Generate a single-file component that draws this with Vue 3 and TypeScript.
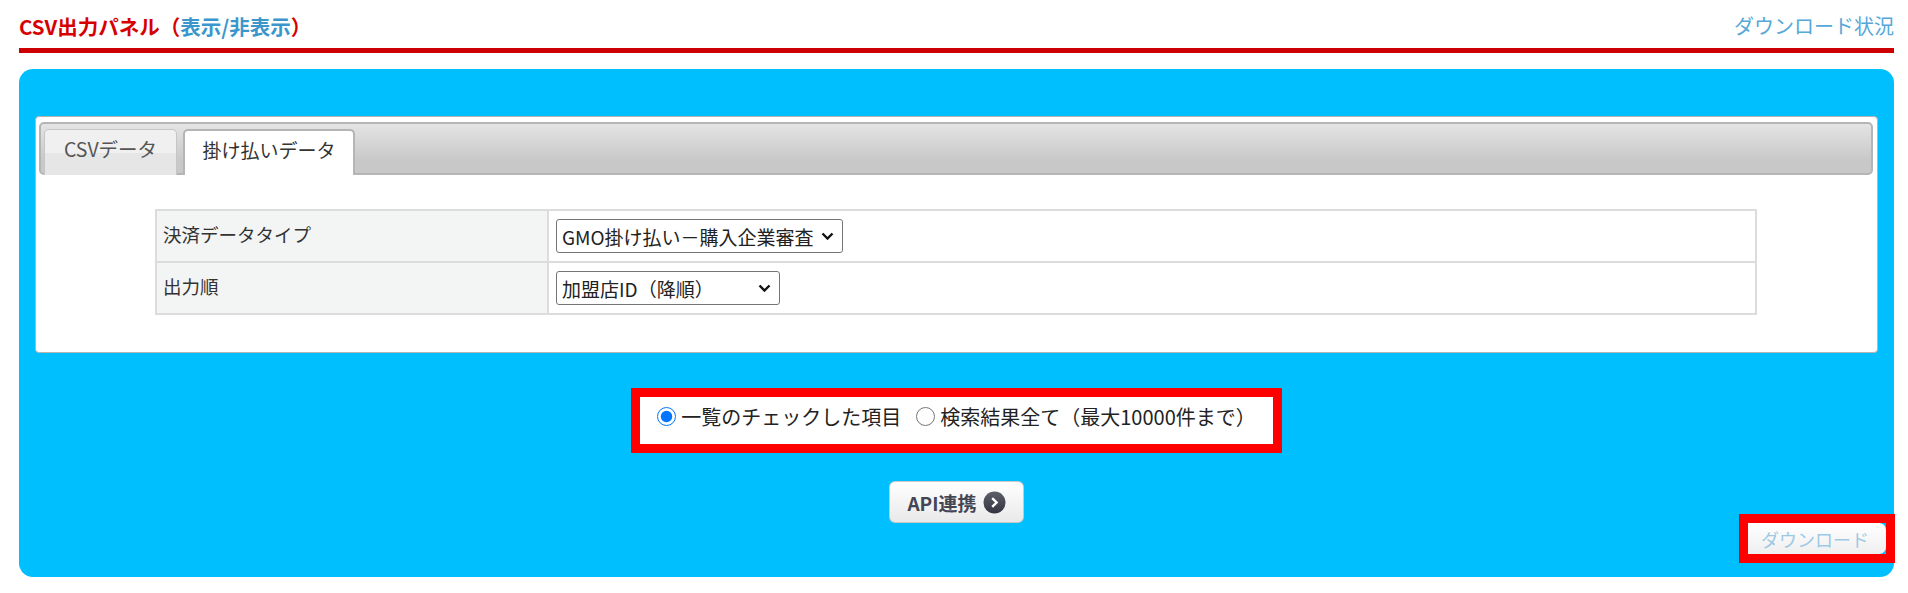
<script setup lang="ts">
import { ref } from 'vue'

const scope = ref<'checked' | 'all'>('checked')
const payType = ref('buyer')
const order = ref('desc')
</script>

<template>
  <div class="page">
    <header class="head">
      <h2 class="title">CSV出力パネル（<a class="toggle">表示/非表示</a>）</h2>
      <a class="status">ダウンロード状況</a>
    </header>

    <section class="panel">
      <div class="card">
        <div class="tabbar">
          <div class="tab">CSVデータ</div>
          <div class="tab active">掛け払いデータ</div>
        </div>
        <table class="form">
          <tbody>
            <tr>
              <th>決済データタイプ</th>
              <td>
                <select v-model="payType" class="sel sel-a">
                  <option value="buyer">GMO掛け払い－購入企業審査</option>
                </select>
              </td>
            </tr>
            <tr>
              <th>出力順</th>
              <td>
                <select v-model="order" class="sel sel-b">
                  <option value="desc">加盟店ID（降順）</option>
                </select>
              </td>
            </tr>
          </tbody>
        </table>
      </div>

      <div class="scope">
        <label class="opt"><input v-model="scope" type="radio" value="checked" />一覧のチェックした項目</label>
        <label class="opt"><input v-model="scope" type="radio" value="all" />検索結果全て（最大10000件まで）</label>
      </div>

      <div class="api-row">
        <button class="api" type="button">
          API連携
          <svg class="go" width="23" height="23" viewBox="0 0 23 23" aria-hidden="true">
            <defs>
              <linearGradient id="goFill" x1="0" y1="0" x2="0" y2="1">
                <stop offset="0" stop-color="#5d5f6b" />
                <stop offset="1" stop-color="#33343f" />
              </linearGradient>
            </defs>
            <circle cx="11.5" cy="11.5" r="11" fill="url(#goFill)" />
            <path d="M9.2 7.2l4.4 4.3-4.4 4.3" fill="none" stroke="#fff" stroke-width="2.4" />
          </svg>
        </button>
      </div>

      <div class="dl-row">
        <button class="download" type="button">ダウンロード</button>
        <span class="mark" aria-hidden="true"></span>
      </div>
    </section>
  </div>
</template>

<style>
html,
body {
  margin: 0;
  background: #fff;
}
</style>

<style scoped>
.page {
  width: 1908px;
  height: 593px;
  padding: 0 14px 0 19px;
  box-sizing: border-box;
  font-family: "Noto Sans CJK JP", "Liberation Sans", sans-serif;
  color: #333;
  overflow: hidden;
}
.head {
  height: 48px;
  border-bottom: 5px solid #cc0000;
  display: flex;
  justify-content: space-between;
  align-items: flex-start;
}
.title {
  margin: 13px 0 0;
  font-size: 20.5px;
  line-height: 26px;
  font-weight: 700;
  color: #d60000;
}
.toggle {
  color: #3b96cc;
}
.status {
  margin-top: 13px;
  font-size: 20px;
  line-height: 26px;
  color: #55a8d8;
}
.panel {
  margin-top: 16px;
  height: 508px;
  box-sizing: border-box;
  padding: 47px 16px 0;
  background: #00bfff;
  border-radius: 14px;
}
.card {
  height: 237px;
  box-sizing: border-box;
  padding: 5px 4px 0 3px;
  background: #fff;
  border: 1px solid #b9b4b4;
  border-radius: 4px;
}
.tabbar {
  height: 53px;
  box-sizing: border-box;
  padding: 5px 0 0 3px;
  display: flex;
  gap: 6px;
  align-items: flex-end;
  background: linear-gradient(#e4e4e4, #c8c8c8 75%);
  border: 2px solid #b5b5b5;
  border-radius: 5px;
}
.tab {
  width: 133px;
  height: 46px;
  box-sizing: border-box;
  margin-bottom: -2px;
  text-align: center;
  font-size: 19.5px;
  line-height: 38px;
  color: #555;
  background: linear-gradient(#f0f0f0 50%, #e6e6e6 50%);
  border: 1px solid #c6c6c6;
  border-bottom: 0;
  border-radius: 5px 5px 0 0;
}
.tab.active {
  width: 172px;
  font-size: 19px;
  color: #333;
  background: #fff;
  border: 2px solid #b5b5b5;
  border-bottom: 0;
}
.form {
  width: 1602px;
  margin: 34px 0 0 116px;
  border-collapse: collapse;
  font-size: 18.5px;
}
.form th,
.form td {
  height: 50px;
  padding: 0 6px;
  border: 2px solid #dcdcdc;
  text-align: left;
  font-weight: 400;
}
.form td {
  padding-left: 7px;
}
.form th {
  width: 378px;
  background: #f3f4f4;
  vertical-align: top;
  line-height: 46px;
}
.sel {
  display: block;
  height: 34px;
  padding: 0 20px 0 5px;
  appearance: none;
  background: #fff url("data:image/svg+xml,%3Csvg xmlns='http://www.w3.org/2000/svg' width='13' height='8' viewBox='0 0 13 8'%3E%3Cpath d='M1.5 1.5l5 5 5-5' fill='none' stroke='%23111' stroke-width='2.4'/%3E%3C/svg%3E") no-repeat right 8px center;
  border: 1px solid #767676;
  border-radius: 3px;
  color: #222;
  font-family: inherit;
  font-size: 19px;
}
.sel-a {
  width: 287px;
}
.sel-b {
  width: 224px;
}
.scope {
  width: 651px;
  height: 65px;
  box-sizing: border-box;
  margin: 35px auto 0;
  padding-bottom: 8px;
  display: flex;
  gap: 15px;
  justify-content: center;
  align-items: center;
  background: #fff;
  border: 9px solid #ff0000;
  font-size: 20px;
  color: #222;
}
.opt {
  display: inline-flex;
  align-items: center;
  gap: 5px;
}
.opt input {
  width: 19px;
  height: 19px;
  margin: 0;
}
.api-row {
  margin-top: 28px;
  display: flex;
  justify-content: center;
}
.api {
  width: 135px;
  height: 42px;
  padding: 0;
  display: inline-flex;
  align-items: center;
  justify-content: center;
  gap: 6px;
  font-family: inherit;
  font-size: 19px;
  font-weight: 700;
  color: #444654;
  background: linear-gradient(#fff, #e9e9e9);
  border: 1px solid #c9c9c9;
  border-radius: 6px;
}
.dl-row {
  position: relative;
  display: flex;
  justify-content: flex-end;
  margin-right: -8px;
}
.download {
  width: 147px;
  height: 31px;
  padding: 0 0 0 5px;
  font-family: inherit;
  font-size: 18px;
  color: #9cc9e6;
  background: linear-gradient(#fff, #efefef);
  border: 0;
  border-radius: 0 7px 7px 0;
}
.mark {
  position: absolute;
  top: -9px;
  right: -9px;
  width: 156px;
  height: 49px;
  box-sizing: border-box;
  border: 9px solid #ff0000;
  pointer-events: none;
}
</style>
